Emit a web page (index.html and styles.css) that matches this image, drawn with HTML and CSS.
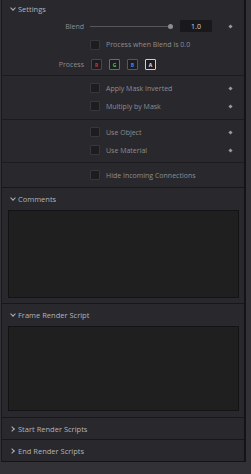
FILE: index.html
```html
<!DOCTYPE html>
<html lang="en">

<head>
    <meta charset="UTF-8">
    <meta name="viewport" content="width=device-width, initial-scale=1.0">
    <title>Inspector</title>
    <link rel="stylesheet" href="styles.css">
</head>

<body>
  <div class="inspector">
    <div class="panel">

      <!-- Settings -->
      <section class="group">
        <div class="group-head"><span class="chev down"></span>Settings</div>

        <div class="block first">
          <div class="row blend-row">
            <span class="label">Blend</span>
            <div class="slider">
              <div class="track"></div>
              <div class="knob"></div>
              <div class="value">1.0</div>
            </div>
            <span class="dot"></span>
          </div>
          <div class="row when-row">
            <span class="label"></span>
            <label class="check"><span class="box"></span>Process when Blend is 0.0</label>
            <span></span>
          </div>
          <div class="row process-row">
            <span class="label">Process</span>
            <div class="channels">
              <span class="chan red">R</span>
              <span class="chan green">G</span>
              <span class="chan blue">B</span>
              <span class="chan white">A</span>
            </div>
            <span></span>
          </div>
        </div>

        <div class="block mask">
          <div class="row">
            <span class="label"></span>
            <label class="check"><span class="box"></span>Apply Mask Inverted</label>
            <span class="dot"></span>
          </div>
          <div class="row">
            <span class="label"></span>
            <label class="check"><span class="box"></span>Multiply by Mask</label>
            <span class="dot"></span>
          </div>
        </div>

        <div class="block">
          <div class="row">
            <span class="label"></span>
            <label class="check"><span class="box"></span>Use Object</label>
            <span class="dot"></span>
          </div>
          <div class="row">
            <span class="label"></span>
            <label class="check"><span class="box"></span>Use Material</label>
            <span class="dot"></span>
          </div>
        </div>

        <div class="block">
          <div class="row">
            <span class="label"></span>
            <label class="check"><span class="box"></span>Hide Incoming Connections</label>
            <span></span>
          </div>
        </div>
      </section>

      <!-- Comments -->
      <section class="group">
        <div class="group-head tall"><span class="chev down"></span>Comments</div>
        <div class="text-area comments"></div>
      </section>

      <!-- Frame Render Script -->
      <section class="group">
        <div class="group-head tall"><span class="chev down"></span>Frame Render Script</div>
        <div class="text-area script"></div>
      </section>

      <section class="group">
        <div class="group-head closed"><span class="chev right"></span>Start Render Scripts</div>
      </section>

      <section class="group">
        <div class="group-head closed"><span class="chev right"></span>End Render Scripts</div>
      </section>

    </div>
  </div>
</body>

</html>
```

FILE: styles.css
```css
/* inspector panel */
body {
  margin: 0;
  padding: 0;
  background-color: #313136;
  font-family: "Open Sans", "Liberation Sans", sans-serif;
  font-size: 7px;
  color: #8e8e92;
}

.inspector {
  width: 251px;
  height: 474px;
  padding-left: 1px;
  box-sizing: border-box;
}

.panel {
  width: 245px;
  background-color: #28282d;
  border-left: 1px solid #1a1a1d;
  border-right: 2px solid #141416;
  border-bottom: 1px solid #141416;
  box-sizing: border-box;
}

.group {
  border-bottom: 1px solid #18181b;
}

.group:last-child {
  border-bottom: none;
}

.group-head {
  height: 17px;
  display: flex;
  align-items: center;
  padding-left: 6px;
  color: #b4b4b8;
  font-size: 7.5px;
}

.group-head.tall {
  height: 22px;
}

.group-head.closed {
  height: 21px;
}

.chev {
  width: 9px;
  height: 9px;
  display: flex;
  align-items: center;
  justify-content: center;
  margin-right: 1px;
}

.chev::before {
  content: "";
  width: 3px;
  height: 3px;
  border-right: 1px solid #b4b4b8;
  border-bottom: 1px solid #b4b4b8;
}

.chev.down::before {
  transform: translateY(-1px) rotate(45deg);
}

.chev.right::before {
  transform: translateX(-1px) rotate(-45deg);
}

/* rows */
.block {
  padding: 3px 0;
  border-top: 1px solid #1c1c1f;
}

.block.mask {
  padding-bottom: 4px;
}

.block.first {
  padding: 0;
  border-top: none;
}

.row {
  display: grid;
  grid-template-columns: 82px 128px 12px;
  column-gap: 6px;
  height: 18px;
  align-items: center;
}

.row.when-row {
  height: 19px;
}

.row.process-row {
  height: 21px;
}

.row .label {
  text-align: right;
}

.dot {
  justify-self: center;
  width: 3px;
  height: 3px;
  background-color: #9a9a9e;
  transform: rotate(45deg);
}

/* slider */
.slider {
  display: flex;
  align-items: center;
  height: 18px;
}

.track {
  width: 78px;
  height: 1px;
  background-color: #56565b;
}

.knob {
  width: 5px;
  height: 5px;
  border-radius: 50%;
  background-color: #8e8e92;
}

.value {
  width: 32px;
  height: 12px;
  margin-left: 7px;
  background-color: #19191b;
  border-radius: 1px;
  color: #d8d8dc;
  font-size: 7px;
  display: flex;
  align-items: center;
  justify-content: center;
}

/* checkbox */
.check {
  display: flex;
  align-items: center;
}

.check .box {
  width: 8px;
  height: 8px;
  background-color: #1d1d20;
  border: 1px solid #36363b;
  border-radius: 1px;
  margin-right: 6px;
}

/* channel buttons */
.channels {
  display: flex;
  gap: 7px;
  padding-left: 1px;
}

.chan {
  width: 9px;
  height: 9px;
  border: 1px solid;
  border-radius: 1px;
  font-size: 5px;
  font-weight: bold;
  display: flex;
  align-items: center;
  justify-content: center;
  background-color: #1d1d20;
}

.chan.red {
  border-color: #b3191b;
  color: #e02a2a;
}

.chan.green {
  border-color: #1fa01f;
  color: #36d636;
}

.chan.blue {
  border-color: #1f5fc4;
  color: #3c86f0;
}

.chan.white {
  border-color: #d0d0d4;
  color: #e8e8ec;
}

/* text areas */
.text-area {
  margin: 0 5px 5px 6px;
  background-color: #1f1f20;
  border: 1px solid #131315;
  box-sizing: border-box;
}

.text-area.comments {
  height: 88px;
}

.text-area.script {
  height: 85px;
  margin-bottom: 6px;
}
```
